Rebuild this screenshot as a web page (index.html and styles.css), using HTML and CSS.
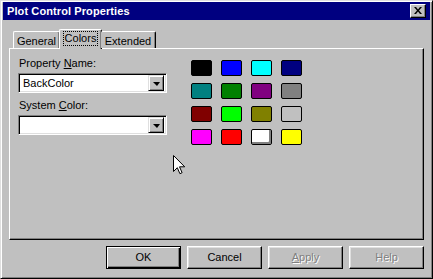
FILE: index.html
```html
<!DOCTYPE html>
<html>
<head>
<meta charset="utf-8">
<link rel="stylesheet" href="styles.css">
</head>
<body>
<div class="window">
  <div class="titlebar">
    <span class="title">Plot Control Properties</span>
    <span class="close"><svg width="8" height="7" viewBox="0 0 8 7"><path d="M0 0h2l2 2.5 2-2.5h2l-3 3.5 3 3.5h-2l-2-2.5-2 2.5h-2l3-3.5z" fill="#000"/></svg></span>
  </div>
  <div class="tabs">
    <div class="tab tab-general">General</div>
    <div class="tab tab-active"><span class="focus">Colors</span></div>
    <div class="tab tab-extended">Extended</div>
  </div>
  <div class="panel">
    <div class="fields">
      <div class="label">Property <u>N</u>ame:</div>
      <div class="combo"><span class="combo-text">BackColor</span><span class="drop"><span class="arrow"></span></span></div>
      <div class="label label-second">System <u>C</u>olor:</div>
      <div class="combo"><span class="combo-text"></span><span class="drop"><span class="arrow"></span></span></div>
    </div>
    <div class="swatches">
      <div class="sw c-black"></div><div class="sw c-blue"></div><div class="sw c-cyan"></div><div class="sw c-navy"></div>
      <div class="sw c-teal"></div><div class="sw c-green"></div><div class="sw c-purple"></div><div class="sw c-gray"></div>
      <div class="sw c-maroon"></div><div class="sw c-lime"></div><div class="sw c-olive"></div><div class="sw c-silver"></div>
      <div class="sw c-magenta"></div><div class="sw c-red"></div><div class="sw c-white"></div><div class="sw c-yellow"></div>
    </div>
  </div>
  <div class="buttons">
    <div class="btn btn-default"><span class="btn-inner">OK</span></div>
    <div class="btn"><span class="btn-inner">Cancel</span></div>
    <div class="btn btn-disabled"><span class="btn-inner"><u>A</u>pply</span></div>
    <div class="btn btn-disabled"><span class="btn-inner">Help</span></div>
  </div>
  <svg class="cursor" width="12" height="20" viewBox="0 0 12 20"><path d="M0.5 0.5v16l3.8-3.8 2.6 6 2.2-1-2.6-5.9h5.2z" fill="#fff" stroke="#000" stroke-width="1"/></svg>
</div>
</body>
</html>
```
FILE: styles.css
```css
* { box-sizing: border-box; }
html, body { margin: 0; padding: 0; background: #c0c0c0; }
body {
  font-family: "Liberation Sans", Arial, sans-serif;
  font-size: 11px;
  color: #000;
}
.window {
  position: relative;
  width: 433px;
  height: 279px;
  background: #c0c0c0;
  border-top: 1px solid #dfdfdf;
  border-left: 1px solid #dfdfdf;
  border-right: 1px solid #000;
  border-bottom: 1px solid #000;
  box-shadow: inset 1px 1px 0 #fff, inset -1px -1px 0 #808080;
  padding: 1px 1px 1px 1px;
  display: flex;
  flex-direction: column;
}
.titlebar {
  height: 18px;
  background: #000080;
  color: #fff;
  display: flex;
  align-items: center;
  justify-content: space-between;
  padding: 0 4px 0 4px;
  margin: 0 1px;
}
.title {
  font-weight: bold;
  font-size: 11px;
  letter-spacing: 0.1px;
}
.close {
  width: 16px;
  height: 14px;
  background: #c0c0c0;
  border-top: 1px solid #fff;
  border-left: 1px solid #fff;
  border-right: 1px solid #000;
  border-bottom: 1px solid #000;
  box-shadow: inset -1px -1px 0 #808080;
  display: flex;
  align-items: center;
  justify-content: center;
  padding-right: 1px;
  padding-bottom: 1px;
}
.close svg { display: block; }
.tabs {
  display: flex;
  align-items: flex-end;
  margin: 8px 0 0 11px;
  height: 20px;
  position: relative;
  z-index: 2;
}
.tab {
  height: 17px;
  background: #c0c0c0;
  border-top: 1px solid #fff;
  border-left: 1px solid #fff;
  border-right: 1px solid #000;
  border-top-left-radius: 2px;
  border-top-right-radius: 2px;
  box-shadow: inset -1px 0 0 #808080;
  display: flex;
  align-items: center;
  justify-content: center;
  padding-top: 1px;
}
.tab-general { width: 47px; }
.tab-extended { width: 55px; border-left: none; }
.tab-active {
  width: 43px;
  height: 20px;
  margin-bottom: -1px;
  margin-left: -1px;
  margin-right: -1px;
  padding-bottom: 3px;
}
.focus {
  outline: 1px dotted #000;
  outline-offset: 0;
  padding: 0 1px;
  line-height: 13px;
}
.panel {
  margin: 0 7px 0 7px;
  height: 192px;
  border-top: 1px solid #fff;
  border-left: 1px solid #fff;
  border-right: 1px solid #000;
  border-bottom: 1px solid #000;
  box-shadow: inset -1px -1px 0 #808080;
  display: flex;
  padding: 8px 0 0 8px;
  position: relative;
  z-index: 1;
}
.fields {
  width: 149px;
  display: flex;
  flex-direction: column;
}
.label { height: 13px; line-height: 13px; margin-left: 1px; }
.label-second { margin-top: 6px; }
.combo {
  margin-top: 3px;
  height: 20px;
  background: #fff;
  border-top: 1px solid #808080;
  border-left: 1px solid #808080;
  border-right: 1px solid #fff;
  border-bottom: 1px solid #fff;
  box-shadow: inset 1px 1px 0 #000, inset -1px -1px 0 #dfdfdf;
  display: flex;
  align-items: center;
  justify-content: space-between;
  padding: 2px 2px 2px 4px;
}
.combo-text { line-height: 14px; }
.drop {
  width: 16px;
  height: 16px;
  background: #c0c0c0;
  border-top: 1px solid #dfdfdf;
  border-left: 1px solid #dfdfdf;
  border-right: 1px solid #000;
  border-bottom: 1px solid #000;
  box-shadow: inset 1px 1px 0 #fff, inset -1px -1px 0 #808080;
  display: flex;
  align-items: center;
  justify-content: center;
}
.arrow {
  width: 0;
  height: 0;
  border-left: 4px solid transparent;
  border-right: 3px solid transparent;
  border-top: 4px solid #000;
  margin-top: 1px;
}
.swatches {
  margin-left: 24px;
  margin-top: 3px;
  display: grid;
  grid-template-columns: repeat(4, 21px);
  grid-auto-rows: 16px;
  column-gap: 9px;
  row-gap: 7px;
  align-content: start;
}
.sw {
  border: 1px solid #000;
  border-radius: 2px;
}
.c-black { background: #000; }
.c-blue { background: #0000ff; }
.c-cyan { background: #00ffff; }
.c-navy { background: #000080; }
.c-teal { background: #008080; }
.c-green { background: #008000; }
.c-purple { background: #800080; }
.c-gray { background: #808080; }
.c-maroon { background: #800000; }
.c-lime { background: #00ff00; }
.c-olive { background: #808000; }
.c-silver { background: #c0c0c0; }
.c-magenta { background: #ff00ff; }
.c-red { background: #ff0000; }
.c-white { background: #fff; box-shadow: inset -2px -2px 0 #808080; }
.c-yellow { background: #ffff00; }
.buttons {
  display: flex;
  justify-content: flex-end;
  gap: 6px;
  margin-top: 6px;
  padding-right: 7px;
}
.btn {
  width: 75px;
  height: 23px;
  background: #c0c0c0;
  border-top: 1px solid #fff;
  border-left: 1px solid #fff;
  border-right: 1px solid #000;
  border-bottom: 1px solid #000;
  box-shadow: inset -1px -1px 0 #808080, inset 1px 1px 0 #dfdfdf;
  display: flex;
  align-items: center;
  justify-content: center;
}
.btn-default {
  border: 1px solid #000;
  box-shadow: inset 1px 1px 0 #fff, inset -1px -1px 0 #000, inset -2px -2px 0 #808080;
}
.btn-inner { line-height: 13px; padding-bottom: 1px; }
.btn-disabled .btn-inner {
  color: #808080;
  text-shadow: 1px 1px 0 #fff;
}
.cursor {
  position: absolute;
  left: 172px;
  top: 154px;
  z-index: 5;
}
```
